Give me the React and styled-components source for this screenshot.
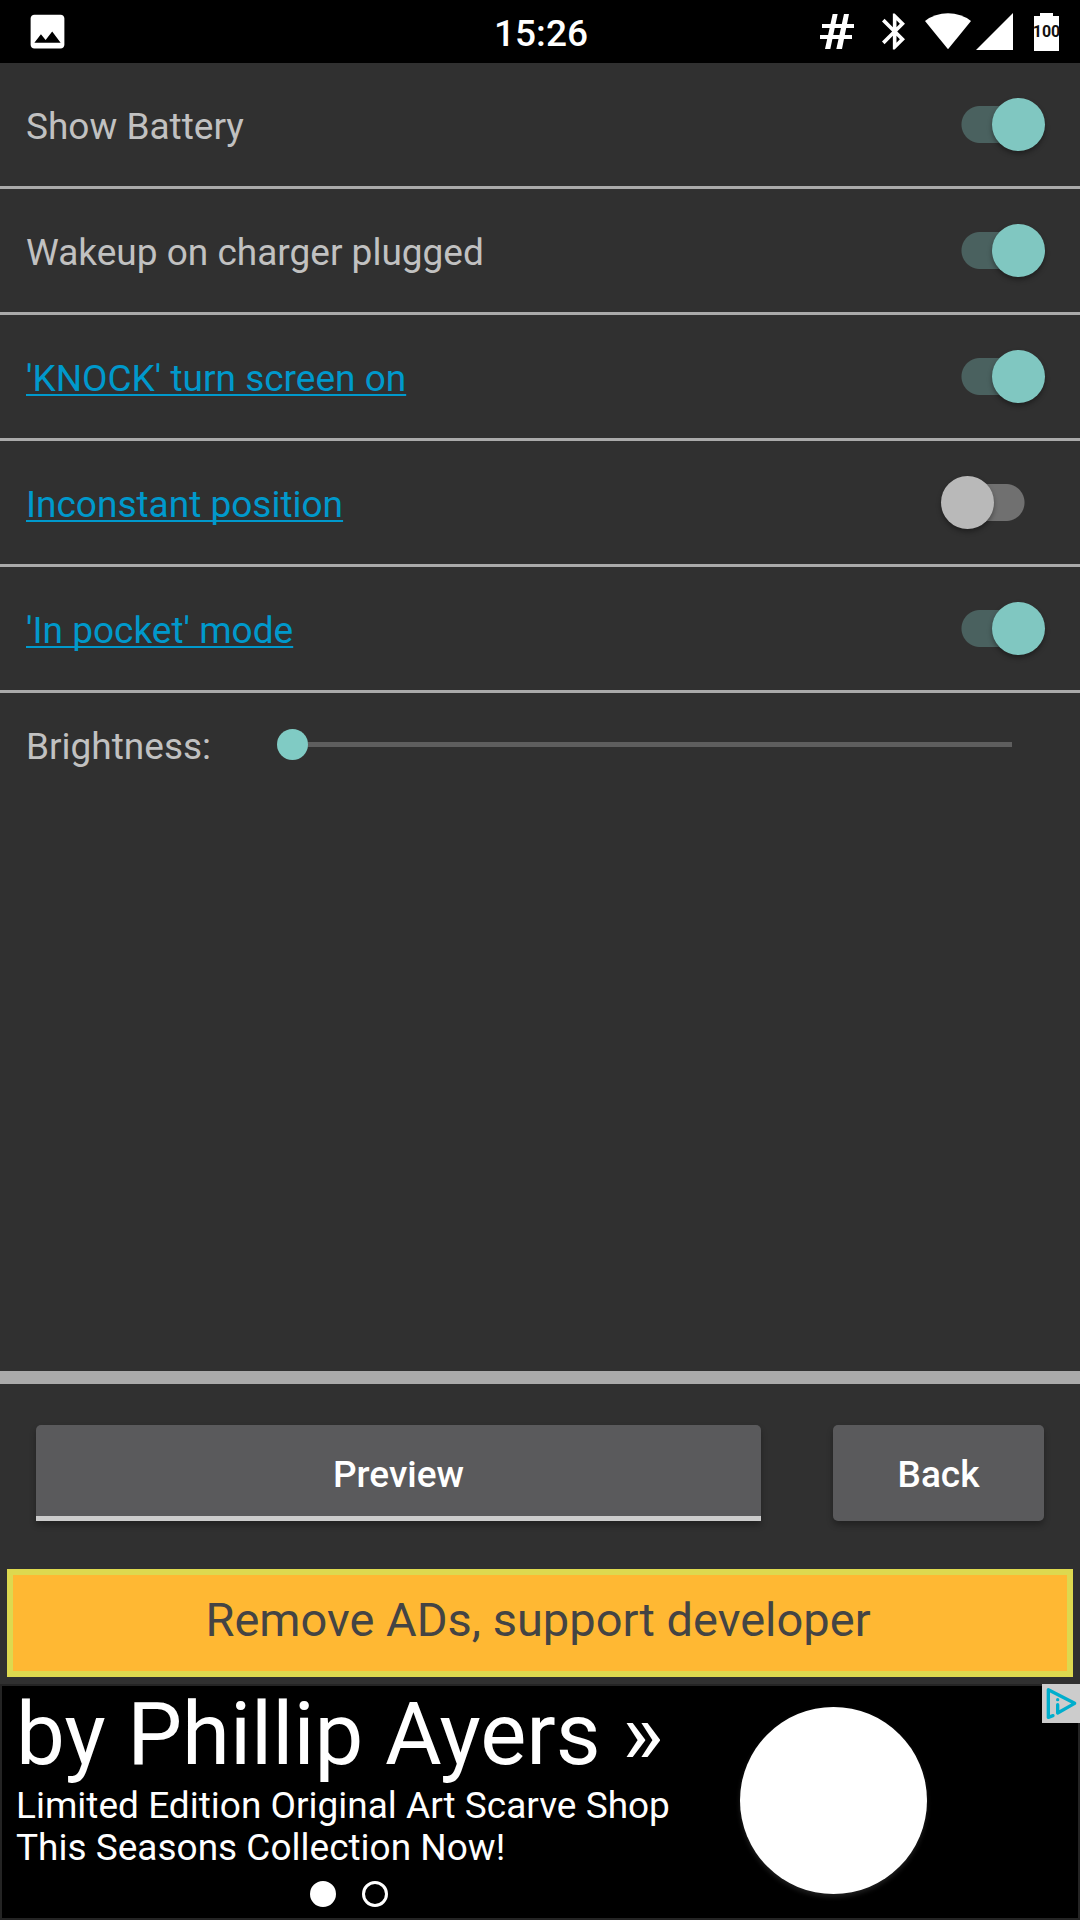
import React, { useState } from "react";
import styled, { createGlobalStyle } from "styled-components";
import { MdImage } from "react-icons/md";

const GlobalStyle = createGlobalStyle`
  * {
    box-sizing: border-box;
  }
  body {
    margin: 0;
    background-color: #303030;
    font-family: Roboto, "Liberation Sans", sans-serif;
  }
  button, input {
    margin: 0;
    font-family: inherit;
  }
`;

const Screen = styled.div`
  min-height: 100vh;
  display: flex;
  flex-direction: column;
  background-color: #303030;
  color: #c1c1c1;
  font-size: 37px;
  line-height: 42px;
`;

const StatusBar = styled.header`
  height: 63px;
  display: grid;
  grid-template-columns: 1fr auto 1fr;
  align-items: center;
  padding: 0 21px 0 25px;
  background-color: #000;
  color: #fff;
`;

const Clock = styled.time`
  padding: 4px 2px 0 0;
  font-weight: 500;
`;

const StatusIcons = styled.div`
  display: flex;
  justify-content: ${(props) => (props.$end ? "flex-end" : "flex-start")};
  align-items: center;
  gap: 20px;
  svg {
    display: block;
  }
`;

const Signals = styled.div`
  display: flex;
  gap: 5px;
  padding-right: 1px;
`;

const Battery = styled.div`
  position: relative;
  span {
    position: absolute;
    inset: 0;
    display: flex;
    justify-content: center;
    align-items: center;
    color: #111;
    font-size: 16px;
    font-weight: 700;
    line-height: 16px;
  }
`;

const Settings = styled.main`
  flex: 1;
`;

const SettingRow = styled.div`
  height: 126px;
  display: flex;
  justify-content: space-between;
  align-items: center;
  padding: 0 35px 0 26px;
  border-bottom: 3px solid #aaa;
`;

const Label = styled.label`
  padding-top: 5px;
`;

const SettingLink = styled.a`
  padding-top: 5px;
  color: #0099cc;
  text-decoration: underline;
  text-decoration-thickness: 2px;
  text-decoration-skip-ink: none;
  text-underline-offset: 3px;
`;

const Switch = styled.input.attrs({ type: "checkbox", role: "switch" })`
  --track: #707070;
  appearance: none;
  width: 104px;
  height: 53px;
  display: flex;
  justify-content: flex-start;
  background: linear-gradient(var(--track), var(--track)) center / 26px 37px no-repeat,
    radial-gradient(circle at center, var(--track) 18px, transparent 19px) -13px center / 104px 37px no-repeat,
    radial-gradient(circle at center, var(--track) 18px, transparent 19px) 13px center / 104px 37px no-repeat;
  &::before {
    content: "";
    width: 53px;
    height: 53px;
    border-radius: 50%;
    background-color: #b9b9b9;
    box-shadow: 0 3px 5px rgba(0, 0, 0, 0.35);
  }
  &:checked {
    --track: #4a615f;
    justify-content: flex-end;
  }
  &:checked::before {
    background-color: #80c7c1;
  }
`;

const BrightnessRow = styled.div`
  display: flex;
  align-items: center;
  gap: 66px;
  padding: 28px 53px 28px 26px;
`;

const Slider = styled.input.attrs({ type: "range" })`
  appearance: none;
  flex: 1;
  min-width: 0;
  height: 31px;
  background: linear-gradient(#5e5e5e, #5e5e5e) center / calc(100% - 31px) 5px no-repeat;
  &::-webkit-slider-thumb {
    appearance: none;
    width: 31px;
    height: 31px;
    border-radius: 50%;
    background-color: #80cbc4;
  }
`;

const Actions = styled.div`
  display: flex;
  gap: 72px;
  padding: 41px 36px 48px;
  border-top: 13px solid #aaa;
`;

const ActionButton = styled.button`
  flex: ${(props) => (props.$wide ? "1" : "0 0 211px")};
  height: 96px;
  padding: ${(props) => (props.$wide ? "8px 0 0" : "3px 0 0")};
  border: 0;
  border-bottom: ${(props) => (props.$wide ? "5px solid #ccc" : "0")};
  border-radius: ${(props) => (props.$wide ? "5px 5px 0 0" : "5px")};
  background-color: #5a5a5c;
  box-shadow: 0 4px 6px rgba(0, 0, 0, 0.3);
  color: #fff;
  font-size: 37px;
  font-weight: 500;
  line-height: 42px;
`;

const RemoveAds = styled.button`
  height: 108px;
  margin: 0 7px 7px;
  padding: 0 4px 6px 0;
  border: 6px solid #ddd94f;
  background-color: #ffb833;
  color: #444;
  font-size: 47px;
  line-height: 56px;
`;

const Banner = styled.aside`
  position: relative;
  min-height: 236px;
  display: grid;
  grid-template-columns: 65fr 35fr;
  border: 2px solid #242424;
  background-color: #000;
  color: #fff;
`;

const BannerText = styled.div`
  padding-left: 14px;
  h2 {
    margin: 0 0 3px;
    font-size: 87px;
    font-weight: 400;
    line-height: 96px;
    white-space: nowrap;
  }
  p {
    margin: 0;
  }
`;

const Dots = styled.div`
  display: flex;
  justify-content: center;
  gap: 26px;
  padding: 12px 20px 0 0;
`;

const Dot = styled.button`
  width: 26px;
  height: 26px;
  padding: 0;
  border: 3px solid #fff;
  border-radius: 50%;
  background-color: ${(props) => (props.$active ? "#fff" : "transparent")};
`;

const BannerArt = styled.div`
  display: flex;
  align-items: center;
  padding: 0 0 3px 39px;
`;

const Disc = styled.div`
  width: 187px;
  height: 187px;
  border-radius: 50%;
  background-color: #fff;
  box-shadow: 0 3px 5px rgba(255, 255, 255, 0.12);
`;

const AdChoices = styled.a`
  position: absolute;
  top: -2px;
  right: -2px;
  width: 38px;
  height: 39px;
  background-color: #ccc;
  svg {
    display: block;
  }
`;

const HashIcon = () => (
  <svg width='42' height='37' viewBox='0 0 126 111' fill='#fff'>
    <path d='M38 3h15L31 108H15zM72 3h15L66 108H49z' />
    <path d='M6 33h96v12H6zM0 66h96v12H0z' />
  </svg>
);

const BluetoothIcon = () => (
  <svg width='23' height='37' viewBox='5 2 12.71 20' fill='#fff'>
    <path d='M17.71 7.71L12 2h-1v7.59L6.41 5 5 6.41 10.59 12 5 17.59 6.41 19 11 14.41V22h1l5.71-5.71-4.3-4.29 4.3-4.29zM13 5.83l1.88 1.88L13 9.59V5.83zm1.88 10.46L13 18.17v-3.76l1.88 1.88z' />
  </svg>
);

const WifiIcon = () => (
  <svg width='46' height='37' viewBox='0 0 138 111' fill='#fff'>
    <path d='M69 109L0 24Q30 1 69 1t69 23z' />
  </svg>
);

const CellIcon = () => (
  <svg width='37' height='37' viewBox='0 0 37 37' fill='#fff'>
    <path d='M0 37L37 0v37z' />
  </svg>
);

const BatteryIcon = () => (
  <svg width='25' height='38' viewBox='0 0 25 38' fill='#fff'>
    <path d='M6 0h13v3h6v35H0V3h6z' />
  </svg>
);

const AdChoicesIcon = () => (
  <svg width='38' height='39' viewBox='0 0 114 117' fill='none' stroke='#00aecd' strokeLinejoin='round' strokeLinecap='round'>
    <path d='M33 95L19 100V17L98 58 47 87V62' strokeWidth='10' />
    <circle cx='47' cy='47' r='5' fill='#00aecd' stroke='none' />
  </svg>
);

const SETTINGS = [
  { id: "battery", text: "Show Battery", on: true },
  { id: "wakeup", text: "Wakeup on charger plugged", on: true },
  { id: "knock", text: "'KNOCK' turn screen on", on: true, link: true },
  { id: "position", text: "Inconstant position", on: false, link: true },
  { id: "pocket", text: "'In pocket' mode", on: true, link: true },
];

export default function App() {
  const [brightness, setBrightness] = useState(0);
  const [slide, setSlide] = useState(0);

  return (
    <>
      <GlobalStyle />
      <Screen>
        <StatusBar>
          <StatusIcons>
            <MdImage size={45} />
          </StatusIcons>
          <Clock>15:26</Clock>
          <StatusIcons $end>
            <HashIcon />
            <BluetoothIcon />
            <Signals>
              <WifiIcon />
              <CellIcon />
            </Signals>
            <Battery>
              <BatteryIcon />
              <span>100</span>
            </Battery>
          </StatusIcons>
        </StatusBar>

        <Settings>
          {SETTINGS.map(({ id, text, on, link }) => (
            <SettingRow key={id}>
              {link ? (
                <SettingLink id={`${id}-label`} href={`#${id}`}>
                  {text}
                </SettingLink>
              ) : (
                <Label id={`${id}-label`} htmlFor={id}>
                  {text}
                </Label>
              )}
              <Switch id={id} aria-labelledby={`${id}-label`} defaultChecked={on} />
            </SettingRow>
          ))}
          <BrightnessRow>
            <Label htmlFor='brightness'>Brightness:</Label>
            <Slider id='brightness' min='0' max='100' value={brightness} onChange={(e) => setBrightness(e.target.value)} />
          </BrightnessRow>
        </Settings>

        <Actions>
          <ActionButton $wide>Preview</ActionButton>
          <ActionButton>Back</ActionButton>
        </Actions>
        <RemoveAds>Remove ADs, support developer</RemoveAds>

        <Banner>
          <BannerText>
            <h2>by Phillip Ayers »</h2>
            <p>
              Limited Edition Original Art Scarve Shop
              <br />
              This Seasons Collection Now!
            </p>
            <Dots>
              {[0, 1].map((i) => (
                <Dot key={i} $active={slide === i} aria-label={`Slide ${i + 1}`} onClick={() => setSlide(i)} />
              ))}
            </Dots>
          </BannerText>
          <BannerArt>
            <Disc />
          </BannerArt>
          <AdChoices href='#adchoices' aria-label='AdChoices'>
            <AdChoicesIcon />
          </AdChoices>
        </Banner>
      </Screen>
    </>
  );
}
